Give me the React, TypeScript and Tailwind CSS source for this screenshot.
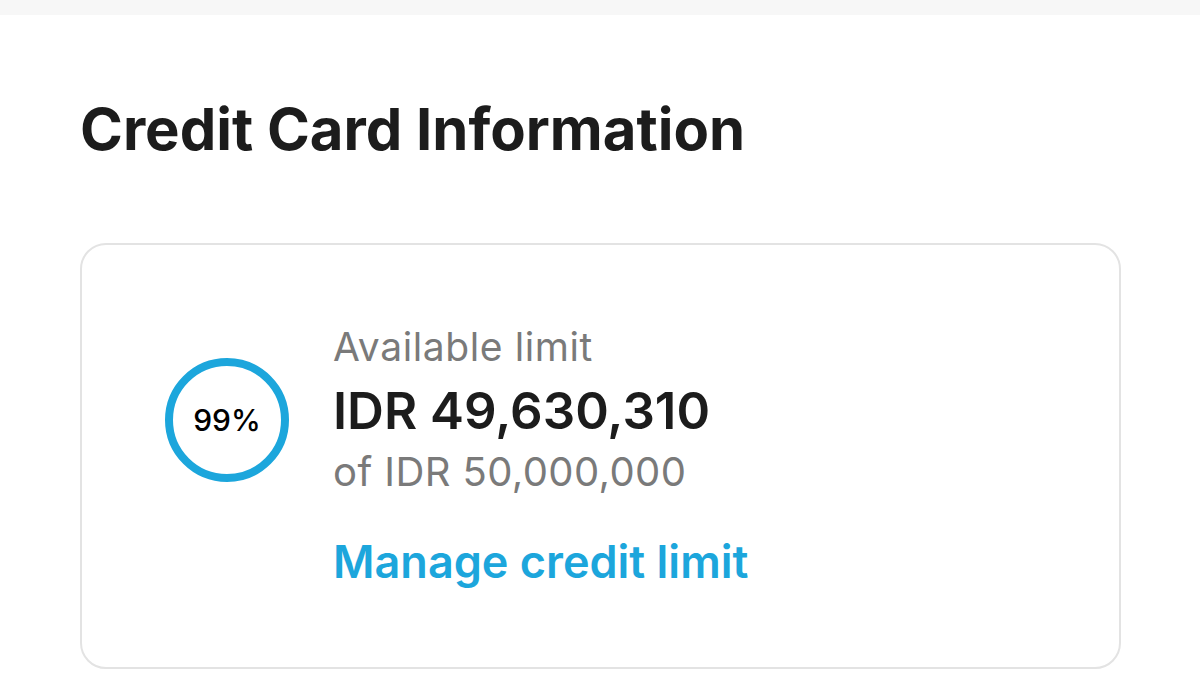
export default function App() {
    return (
        <div className="min-h-[693px] w-full bg-white font-['Inter',sans-serif]">
            <div className="h-[15px] w-full bg-[#f7f7f7]"></div>
            <div className="px-[80px]">
                <h1 className="mt-[79px] text-[58px] font-bold leading-[70px] tracking-[0px] text-[#1c1c1c]">
                    Credit Card Information
                </h1>
                <div className="mt-[79px] h-[426px] w-[1041px] rounded-[26px] border-2 border-[#e3e3e3] pl-[83px] pt-[80px]">
                    <div className="flex items-start">
                        <div className="mt-[33px] flex h-[124px] w-[124px] shrink-0 items-center justify-center rounded-full border-[8px] border-[#1ca6dc]">
                            <span className="text-[30px] font-medium text-black">99%</span>
                        </div>
                        <div className="ml-[44px] flex flex-col">
                            <span className="text-[39px] leading-[44px] tracking-[0.6px] text-[#7a7a7a]">
                                Available limit
                            </span>
                            <span className="mt-[12px] text-[51px] font-semibold leading-[60px] text-[#1c1c1c]">
                                IDR 49,630,310
                            </span>
                            <span className="mt-[7px] text-[40px] leading-[48px] tracking-[0.4px] text-[#7a7a7a]">
                                of IDR 50,000,000
                            </span>
                            <span className="mt-[38px] text-[45px] font-semibold leading-[56px] text-[#1ca6dc]">
                                Manage credit limit
                            </span>
                        </div>
                    </div>
                </div>
            </div>
        </div>
    );
}
